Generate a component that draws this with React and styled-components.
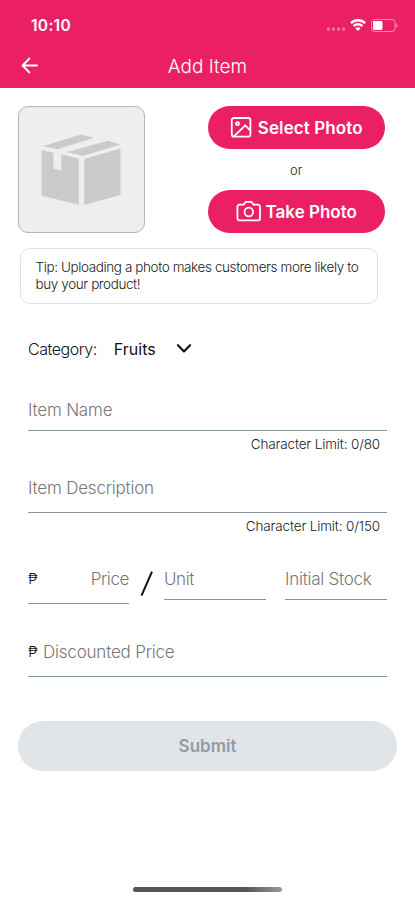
import * as React from "react";
import styled, { createGlobalStyle } from "styled-components";

const pink = "#eb1f63";

const GlobalStyle = createGlobalStyle`
  * {
    box-sizing: border-box;
  }
  body {
    margin: 0;
    background: #fff;
    font-family: "Inter", "Liberation Sans", sans-serif;
    font-weight: 300;
    color: #222;
  }
  button {
    font-family: inherit;
    border: none;
    padding: 0;
  }
`;

const BackIcon = () => (
  <svg width="18" height="18" viewBox="0 0 18 18" fill="none" stroke="#fff" strokeWidth="1.8" strokeLinecap="round" strokeLinejoin="round">
    <path d="M16 8.500H1.800M8.400 1.500 1.600 8.500l6.800 7" />
  </svg>
);

const WifiIcon = () => (
  <svg width="16" height="12" viewBox="0 0 16 12" fill="none" stroke="#fff" strokeWidth="2.3">
    <path d="M0.900 4.2a10 10 0 0 1 14.200 0" />
    <path d="M3.6 7.1a6.2 6.2 0 0 1 8.8 0" />
    <path d="M8 11.9 5.4 9.3a3.5 3.5 0 0 1 5.2 0z" fill="#fff" stroke="none" />
  </svg>
);

const BatteryIcon = () => (
  <svg width="27" height="13" viewBox="0 0 27 13" fill="none">
    <rect x="0.5" y="0.5" width="23.6" height="12" rx="3" stroke="#fff" strokeOpacity="0.5" />
    <rect x="2" y="2" width="9.5" height="9" rx="1.4" fill="#fff" />
    <path d="M25.3 4.5c1.6.7 1.6 3.3 0 4z" fill="#fff" fillOpacity="0.55" />
  </svg>
);

const BoxIcon = () => (
  <svg width="80" height="72" viewBox="0 0 80 72" fill="#cbcbcb">
    <path d="M1.500 12.2 40 0.5l13 3.200L16.500 15.300z" />
    <path d="M26.500 18 66.500 6.800 79.500 10.500 41.500 22z" />
    <path d="M0.500 16 12.500 18.800V34.500l7.800 2.200V20.300L37.800 24.800V71L0.500 61.500z" />
    <path d="M43.200 25 79.500 14.600V61L43.200 71z" />
  </svg>
);

const ImageIcon = () => (
  <svg width="22" height="22" viewBox="0 0 22 22" fill="none" stroke="#fff" strokeWidth="1.8" strokeLinecap="round" strokeLinejoin="round">
    <rect x="1.800" y="1" width="18.600" height="18.600" rx="2" />
    <circle cx="7.500" cy="6.700" r="1.500" />
    <path d="M4.200 19.200 15.200 8.300l5 5" />
  </svg>
);

const CameraIcon = () => (
  <svg width="25" height="21" viewBox="0 0 25 21" fill="none" stroke="#fff" strokeWidth="1.8" strokeLinejoin="round">
    <path d="M3.400 3.700h4.200L9.200 1.500q.4-.6 1.100-.6h4.600q.7 0 1.100.6l1.600 2.200H22a2 2 0 0 1 2 2v11.700a2 2 0 0 1-2 2H3.400a2 2 0 0 1-2-2V5.700a2 2 0 0 1 2-2z" />
    <circle cx="12.800" cy="11" r="4.300" />
  </svg>
);

const ChevronIcon = () => (
  <svg width="16" height="10" viewBox="0 0 16 10" fill="none" stroke="#111" strokeWidth="2.1" strokeLinecap="round" strokeLinejoin="round">
    <path d="M1.900 1.200 8 7.400l6.100-6.200" />
  </svg>
);

const SlashMark = () => (
  <svg width="14" height="26" viewBox="0 0 14 26" fill="none" stroke="#111" strokeWidth="2">
    <path d="M12 0.600 1.500 24.600" />
  </svg>
);

const App = () => {
  return (
    <>
      <GlobalStyle />
      <Screen>
        <Header>
          <StatusBar>
            <Time>10:10</Time>
            <StatusIcons>
              <Signal>
                <i />
                <i />
                <i />
                <i />
              </Signal>
              <WifiIcon />
              <BatteryIcon />
            </StatusIcons>
          </StatusBar>
          <NavBar>
            <BackIcon />
            <Title>Add Item</Title>
          </NavBar>
        </Header>

        <PhotoRow>
          <Thumbnail>
            <BoxIcon />
          </Thumbnail>
          <PhotoActions>
            <PhotoButton $gap={6}>
              <ImageIcon />
              <Label $spacing="0.1px">Select Photo</Label>
            </PhotoButton>
            <Or>or</Or>
            <PhotoButton $gap={5}>
              <CameraIcon />
              <Label $spacing="0">Take Photo</Label>
            </PhotoButton>
          </PhotoActions>
        </PhotoRow>

        <Tip>
          Tip: Uploading a photo makes customers more likely to
          <br />
          buy your product!
        </Tip>

        <Form>
          <CategoryRow>
            <Label $spacing="-0.45px">Category:</Label>
            <Selected>Fruits</Selected>
            <ChevronIcon />
          </CategoryRow>

          <Field $height={39}>
            <Label>Item Name</Label>
          </Field>
          <Limit>Character Limit: 0/80</Limit>

          <Field $height={43}>
            <Label>Item Description</Label>
          </Field>
          <Limit>Character Limit: 0/150</Limit>

          <PriceRow>
            <Field $height={43} $width={101} $between>
              <Peso>₱</Peso>
              <Label $spacing="-0.4px">Price</Label>
            </Field>
            <SlashBox>
              <SlashMark />
            </SlashBox>
            <Field $height={39} $width={102}>
              <Label $spacing="-0.4px">Unit</Label>
            </Field>
            <Field $height={39} $width={102} $last>
              <Label $spacing="-0.25px">Initial Stock</Label>
            </Field>
          </PriceRow>

          <Field $height={43}>
            <Peso>₱</Peso>
            <Label>Discounted Price</Label>
          </Field>
        </Form>

        <Submit>Submit</Submit>
        <HomeIndicator />
      </Screen>
    </>
  );
};

const Screen = styled.main`
  width: 415px;
  height: 900px;
  display: flex;
  flex-direction: column;
  overflow: hidden;
  background: #fff;
`;

const Header = styled.header`
  height: 88px;
  flex: none;
  background: ${pink};
  color: #fff;
`;

const StatusBar = styled.div`
  height: 46px;
  padding: 4px 17px 0 31px;
  display: flex;
  align-items: center;
  justify-content: space-between;
`;

const Time = styled.span`
  font-size: 15.5px;
  font-weight: 600;
  letter-spacing: 0.3px;
`;

const StatusIcons = styled.div`
  display: flex;
  align-items: center;
  gap: 5px;
`;

const Signal = styled.div`
  display: flex;
  gap: 1.5px;
  padding-top: 8px;

  i {
    width: 3.5px;
    height: 3.5px;
    border-radius: 50%;
    background: rgba(255, 255, 255, 0.35);
  }
`;

const NavBar = styled.div`
  height: 40px;
  padding: 0 21px;
  display: grid;
  grid-template-columns: 18px 1fr 18px;
  align-items: center;
`;

const Title = styled.h1`
  margin: 0;
  padding-top: 1px;
  font-size: 19px;
  font-weight: 300;
  text-align: center;
`;

const PhotoRow = styled.section`
  display: flex;
  justify-content: space-between;
  padding: 18px 30px 0 18px;
`;

const Thumbnail = styled.div`
  width: 127px;
  height: 127px;
  display: flex;
  align-items: center;
  justify-content: center;
  padding-right: 2px;
  border: 1px solid #b5b5b5;
  border-radius: 10px;
  background: #eee;
`;

const PhotoActions = styled.div`
  width: 177.5px;
  display: flex;
  flex-direction: column;
`;

const PhotoButton = styled.button`
  height: 43px;
  display: flex;
  align-items: center;
  justify-content: center;
  gap: ${(p) => p.$gap}px;
  border-radius: 22px;
  background: ${pink};
  color: #fff;
  font-size: 17px;
  font-weight: 600;
`;

const Or = styled.div`
  height: 41px;
  line-height: 42px;
  font-size: 13px;
  text-align: center;
`;

const Label = styled.span`
  letter-spacing: ${(p) => p.$spacing || "-0.2px"};
  white-space: nowrap;
`;

const Tip = styled.div`
  width: 358px;
  height: 56px;
  margin: 15px 0 0 20px;
  padding: 10px 14.5px;
  border: 1px solid #e2e2e4;
  border-radius: 10px;
  font-size: 13.5px;
  line-height: 17px;
  letter-spacing: -0.4px;
  white-space: nowrap;
`;

const Form = styled.section`
  padding: 0 28px;
  font-size: 17px;
  color: #777;
`;

const CategoryRow = styled.div`
  height: 30px;
  margin: 30px 0 28px;
  display: flex;
  align-items: center;
  color: #111;
  font-size: 16px;
`;

const Selected = styled.span`
  margin: 0 20px 0 17px;
  font-weight: 400;
`;

const Field = styled.div`
  width: ${(p) => (p.$width ? `${p.$width}px` : "100%")};
  height: ${(p) => p.$height}px;
  display: flex;
  align-items: flex-start;
  justify-content: ${(p) => (p.$between ? "space-between" : "flex-start")};
  gap: 4px;
  margin-left: ${(p) => (p.$last ? "auto" : "0")};
  line-height: 36px;
  border-bottom: 1px solid #8796a1;
`;

const Limit = styled.div`
  height: 39px;
  padding: 4px 7px 0 0;
  line-height: 18px;
  font-size: 13.5px;
  letter-spacing: -0.15px;
  text-align: right;
  color: #222;
`;

const PriceRow = styled.div`
  display: flex;
  align-items: flex-start;
  height: 43px;
  margin: 9px 0 30px;
`;

const SlashBox = styled.div`
  width: 35px;
  padding: 10px 0 0 11px;
`;

const Peso = styled.span`
  width: 11px;
  color: #111;
  font-size: 15px;
  font-weight: 300;
`;

const Submit = styled.button`
  width: 379px;
  height: 50px;
  flex: none;
  margin: 44px 0 0 18px;
  border-radius: 25px;
  background: #e1e5e8;
  color: #929ba5;
  font-size: 17px;
  font-weight: 600;
`;

const HomeIndicator = styled.div`
  width: 149px;
  height: 5px;
  flex: none;
  margin: auto auto 8px 133px;
  border-radius: 3px;
  background: linear-gradient(90deg, #555 75%, #999);
`;

export default App;
